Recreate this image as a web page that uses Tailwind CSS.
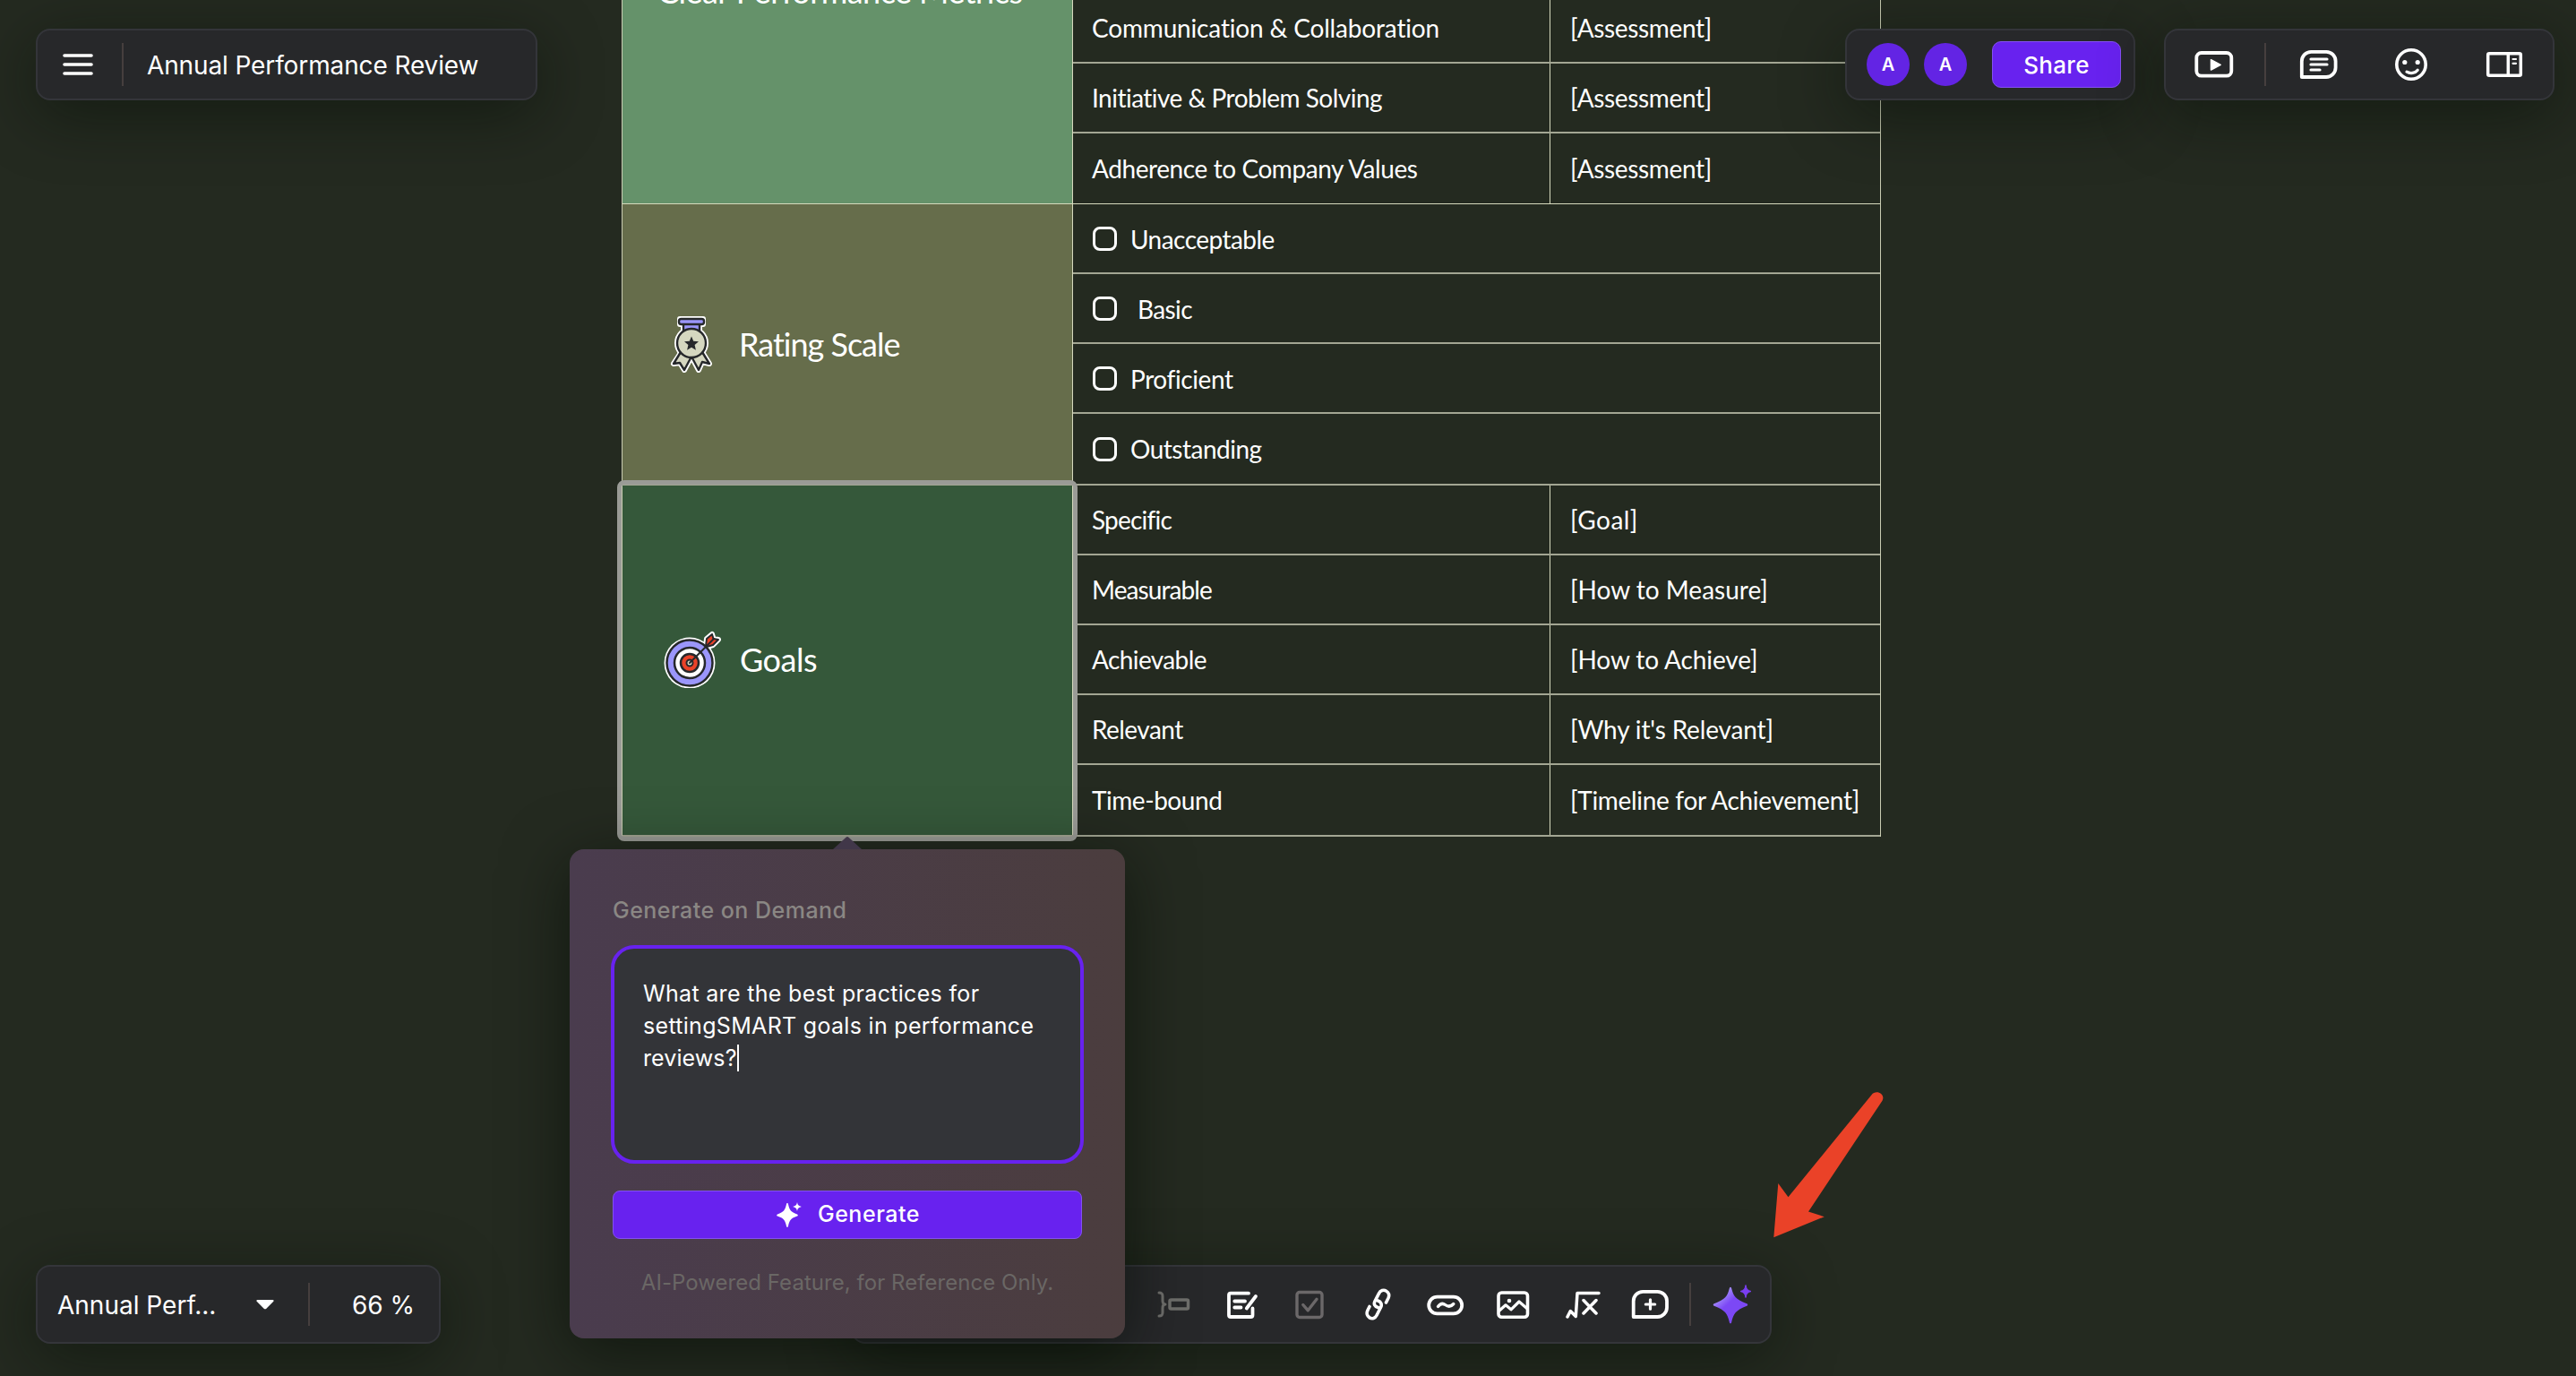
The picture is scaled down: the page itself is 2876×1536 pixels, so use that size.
<!DOCTYPE html>
<html lang="en">
<head>
    <meta charset="UTF-8">
    <meta name="viewport" content="width=device-width, initial-scale=1.0">
    <title>Annual Performance Review</title>
    <script src="https://cdn.jsdelivr.net/npm/@tailwindcss/browser@4"></script>
</head>
<body class="bg-[#242a20] text-white font-['Inter',sans-serif]">
    <div class="relative w-[2876px] h-[1536px] overflow-hidden">

        <!-- Canvas table -->
        <div class="absolute left-[694px] top-[-242px] w-[1406px] border-x border-[#c9ccb2] font-['Lato',sans-serif] text-[28px]">
            <section class="flex h-[470px] border-b border-[#d6d9bd]">
                <div class="w-[503px] shrink-0 flex items-center pl-[39px] pb-[5px] bg-[#65926a] border-r border-[#d6d9bd] text-[36px] tracking-[-0.55px]">Clear Performance Metrics</div>
                <div class="flex-1 grid grid-rows-6 divide-y-2 divide-[#a3a693]">
                    <div class="flex"><div class="w-[533px] border-r border-[#d6d9bd]"></div></div>
                    <div class="flex"><div class="w-[533px] border-r border-[#d6d9bd]"></div></div>
                    <div class="flex"><div class="w-[533px] border-r border-[#d6d9bd]"></div></div>
                    <div class="flex">
                        <div class="w-[533px] border-r border-[#d6d9bd] flex items-center pl-[21px] tracking-[-0.17px]">Communication &amp; Collaboration</div>
                        <div class="flex items-center pl-[22px] tracking-[-0.35px]">[Assessment]</div>
                    </div>
                    <div class="flex">
                        <div class="w-[533px] border-r border-[#d6d9bd] flex items-center pl-[21px] tracking-[-0.52px]">Initiative &amp; Problem Solving</div>
                        <div class="flex items-center pl-[22px] tracking-[-0.35px]">[Assessment]</div>
                    </div>
                    <div class="flex">
                        <div class="w-[533px] border-r border-[#d6d9bd] flex items-center pl-[21px] tracking-[-0.42px]">Adherence to Company Values</div>
                        <div class="flex items-center pl-[22px] tracking-[-0.35px]">[Assessment]</div>
                    </div>
                </div>
            </section>
            <section class="flex h-[314px] border-b-2 border-[#a3a693]">
                <div class="w-[503px] shrink-0 flex items-center gap-[29px] pl-[53px] bg-[#666d4b] border-r border-[#d6d9bd] text-[36px]">
                    <svg class="w-[48px] h-[64px]" viewBox="0 0 48 64" fill="none" stroke-linejoin="round">
                        <g stroke="#fff" stroke-width="6" fill="#fff"><path d="M11 4h26v6h-4v6H15v-6h-4z"/><circle cx="24" cy="31" r="16"/><path d="M12 42 4 54l7-1 5 8 8-15 8 15 4-9 8 2-8-13z"/></g>
                        <g stroke="#26282b" stroke-width="2.4"><path fill="#d5d7c0" d="M12 41 4 54l7-1 5 8 8-15 8 15 4-9 8 2-8-13z"/><path fill="#9b96fb" d="M15 8h18v10H15z"/><rect x="10" y="4" width="28" height="6" rx="2.5" fill="#9b96fb"/><circle cx="24" cy="31" r="16" fill="#d5d7c0"/></g>
                        <path fill="#26282b" d="m24 23.500 2.200 5.300 5.800.5-4.400 3.800 1.300 5.600-4.900-3-4.900 3 1.300-5.600-4.400-3.800 5.800-.5z"/>
                    </svg>
                    <span class="tracking-[-1px]">Rating Scale</span>
                </div>
                <div class="flex-1 grid grid-rows-4 divide-y-2 divide-[#a3a693]">
                    <div class="flex items-center pl-[22px] pt-px gap-[15px]"><i class="w-[27px] h-[27px] border-3 border-white rounded-[8px]"></i><span class="tracking-[-0.55px]">Unacceptable</span></div>
                    <div class="flex items-center pl-[22px] pt-px gap-[23px]"><i class="w-[27px] h-[27px] border-3 border-white rounded-[8px]"></i><span class="tracking-[-0.6px]">Basic</span></div>
                    <div class="flex items-center pl-[22px] pt-px gap-[15px]"><i class="w-[27px] h-[27px] border-3 border-white rounded-[8px]"></i><span class="tracking-[-0.4px]">Proficient</span></div>
                    <div class="flex items-center pl-[22px] gap-[15px]"><i class="w-[27px] h-[27px] border-3 border-white rounded-[8px]"></i><span class="tracking-[-0.5px]">Outstanding</span></div>
                </div>
            </section>
            <section class="flex h-[392px] border-b-2 border-[#a3a693]">
                <div class="w-[503px] shrink-0 flex items-center gap-[21px] pl-[46px] pb-[3px] bg-[#35583a] border-r border-[#d6d9bd] text-[36px]">
                    <svg class="w-[64px] h-[64px]" viewBox="0 0 64 64" fill="none" stroke-linejoin="round" stroke-linecap="round">
                        <circle cx="29" cy="36" r="28.500" fill="#fff"/>
                        <path d="m47 17 1-8 6-5 1.500 5L61 10l-6 6-7 2z" fill="#fff" stroke="#fff" stroke-width="6"/>
                        <circle cx="29" cy="36" r="25.500" fill="#9b96fb" stroke="#26282b" stroke-width="2.500"/>
                        <circle cx="29" cy="36" r="17" fill="#fff" stroke="#26282b" stroke-width="2.500"/>
                        <circle cx="29" cy="36" r="10" fill="#ea4228" stroke="#26282b" stroke-width="2.500"/>
                        <circle cx="29" cy="36" r="3.500" fill="#d5d7c0" stroke="#26282b" stroke-width="2"/>
                        <path d="m47 17 1-8 6-5 1.500 5L61 10l-6 6-7 2z" fill="#ea4228" stroke="#26282b" stroke-width="2"/>
                        <path d="M29 36 56 9" stroke="#26282b" stroke-width="2"/>
                    </svg>
                    <span class="tracking-[-0.5px]">Goals</span>
                </div>
                <div class="flex-1 grid grid-rows-5 divide-y-2 divide-[#a3a693]">
                    <div class="flex">
                        <div class="w-[533px] border-r border-[#d6d9bd] flex items-center pl-[21px] tracking-[-0.8px]">Specific</div>
                        <div class="flex items-center pl-[22px] tracking-[0.45px]">[Goal]</div>
                    </div>
                    <div class="flex">
                        <div class="w-[533px] border-r border-[#d6d9bd] flex items-center pl-[21px] tracking-[-0.9px]">Measurable</div>
                        <div class="flex items-center pl-[22px]">[How to Measure]</div>
                    </div>
                    <div class="flex">
                        <div class="w-[533px] border-r border-[#d6d9bd] flex items-center pl-[21px] tracking-[-0.6px]">Achievable</div>
                        <div class="flex items-center pl-[22px] tracking-[-0.1px]">[How to Achieve]</div>
                    </div>
                    <div class="flex">
                        <div class="w-[533px] border-r border-[#d6d9bd] flex items-center pl-[21px] tracking-[-0.55px]">Relevant</div>
                        <div class="flex items-center pl-[22px] tracking-[-0.15px]">[Why it's Relevant]</div>
                    </div>
                    <div class="flex">
                        <div class="w-[533px] border-r border-[#d6d9bd] flex items-center pl-[21px] tracking-[-0.45px]">Time-bound</div>
                        <div class="flex items-center pl-[22px] tracking-[-0.31px]">[Timeline for Achievement]</div>
                    </div>
                </div>
            </section>
        </div>

        <!-- Selected cell outline -->
        <div class="absolute left-[689px] top-[536px] w-[514px] h-[403px] border-5 border-[#9a9b96] rounded-lg"></div>

        <!-- Title bar -->
        <div class="absolute left-[40px] top-[32px] w-[560px] h-[80px] flex items-center pl-[28px] bg-[#27282a] border-2 border-[#34353a] rounded-2xl shadow-[0_16px_72px_rgba(0,10,0,0.45)]">
            <svg class="w-[34px] h-[24px]" viewBox="0 0 34 24" stroke="#fff" stroke-width="3.600" stroke-linecap="round"><path d="M2 2h30M2 12h30M2 22h30"/></svg>
            <div class="w-[2px] h-[48px] ml-[32px] bg-[#463f3e]"></div>
            <span class="ml-[26px] mt-[2px] text-[28px] tracking-[-0.12px]">Annual Performance Review</span>
        </div>

        <!-- Share -->
        <div class="absolute left-[2060px] top-[32px] w-[324px] h-[80px] flex items-center pl-[22px] bg-[#27282a] border-2 border-[#34353a] rounded-2xl shadow-[0_16px_72px_rgba(0,10,0,0.45)]">
            <div class="w-[48px] h-[48px] rounded-full bg-[#6324e4] flex items-center justify-center text-[20px] font-semibold">A</div>
            <div class="w-[48px] h-[48px] ml-[16px] rounded-full bg-[#6324e4] flex items-center justify-center text-[20px] font-semibold">A</div>
            <button class="w-[144px] h-[52px] ml-[28px] rounded-[10px] bg-[#6822ef] border border-[#8450f2] text-[26px] font-medium tracking-[0.3px]">Share</button>
        </div>

        <!-- View tools -->
        <div class="absolute left-[2416px] top-[32px] w-[436px] h-[80px] flex items-center pl-[30px] bg-[#27282a] border-2 border-[#34353a] rounded-2xl shadow-[0_16px_72px_rgba(0,10,0,0.45)]">
            <svg class="w-[48px] h-[48px]" viewBox="0 0 48 48" fill="none" stroke="#fff" stroke-width="3.800"><rect x="4.300" y="11" width="39" height="25.700" rx="5.500"/><path d="M20.500 18.700v11.400l10.700-5.700z" fill="#fff" stroke-width="1.500" stroke-linejoin="round"/></svg>
            <div class="w-[2px] h-[48px] ml-[32px] bg-[#463f3e]"></div>
            <svg class="w-[48px] h-[48px] ml-[35px]" viewBox="0 0 48 48" fill="none" stroke="#fff" stroke-width="3.800" stroke-linecap="round" stroke-linejoin="round"><path d="M4.800 38V20.500C4.800 14.500 9.500 9.800 15.300 9.800h17C38 9.800 42.600 14.500 42.600 20.300v7.200c0 5.800-4.700 10.500-10.500 10.500z"/><path stroke-width="3.200" d="M15 18h18M15 24h18M15 30h10"/></svg>
            <svg class="w-[48px] h-[48px] ml-[55px]" viewBox="0 0 48 48" fill="none" stroke="#fff" stroke-width="3.600" stroke-linecap="round"><circle cx="24" cy="24" r="16.200"/><circle cx="16.800" cy="21.500" r="2.600" fill="#fff" stroke="none"/><circle cx="31.200" cy="21.500" r="2.600" fill="#fff" stroke="none"/><path stroke-width="3.200" d="M19 32.200c4 2.300 9.500 1.600 12.200-2"/></svg>
            <svg class="w-[48px] h-[48px] ml-[56px]" viewBox="0 0 48 48" fill="none" stroke="#fff" stroke-width="3.500" stroke-linecap="round"><rect x="5.700" y="11.700" width="36.600" height="24.600" rx="1.500"/><path stroke-linecap="butt" d="M28.300 11v26"/><path stroke-width="2.200" d="M33.500 18h3.500M33.500 22.800h3.500"/></svg>
        </div>

        <!-- Page and zoom -->
        <div class="absolute left-[40px] top-[1412px] w-[452px] h-[88px] flex items-center pl-[22px] bg-[#27282a] border-2 border-[#34353a] rounded-2xl shadow-[0_16px_72px_rgba(0,10,0,0.45)]">
            <span class="w-[222px] text-[28px] mt-[2px]">Annual Perf...</span>
            <svg class="w-[20px] h-[11px]" viewBox="0 0 20 11" fill="#fff"><path d="M1.500 0h17c1 0 1.500 1 .8 1.700l-8.200 8.200c-.6.6-1.600.6-2.200 0L.7 1.700C0 1 .5 0 1.500 0z"/></svg>
            <div class="w-[2px] h-[48px] ml-[38px] bg-[#463f3e]"></div>
            <span class="ml-[47px] mt-[2px] text-[28px]">66 %</span>
        </div>

        <!-- Bottom toolbar -->
        <div class="absolute left-[950px] top-[1412px] w-[1028px] h-[88px] flex items-center gap-[28px] pl-[334px] bg-[#27282a] border-2 border-[#34353a] rounded-2xl shadow-[0_16px_72px_rgba(0,10,0,0.45)]">
            <svg class="w-[48px] h-[48px] shrink-0" viewBox="0 0 48 48" fill="none" stroke="#6e6e6b" stroke-width="3" stroke-linecap="round" stroke-linejoin="round"><path d="M8 11c3 0 4 1 4 4v5c0 2.500.8 4 3 4-2.200 0-3 1.500-3 4v5c0 3-1 4-4 4"/><rect x="20" y="19" width="20.500" height="10" rx="1.500" stroke-width="3.500"/></svg>
            <svg class="w-[48px] h-[48px] shrink-0" viewBox="0 0 48 48" fill="none" stroke="#fff" stroke-width="3.800" stroke-linecap="round" stroke-linejoin="round"><path d="M32 11.700H12a2 2 0 0 0-2 2V36a2 2 0 0 0 2 2h22.500a2 2 0 0 0 2-2v-7.500M40 15 29.800 28.500M16.300 20.500H28M16.300 27.500h7.200"/></svg>
            <svg class="w-[48px] h-[48px] shrink-0" viewBox="0 0 48 48" fill="none" stroke="#6b6869" stroke-width="3.400" stroke-linecap="round" stroke-linejoin="round"><rect x="10" y="10.500" width="28" height="28" rx="3"/><path d="m16.800 24.500 5.500 6.300 9.700-12.500"/></svg>
            <svg class="w-[48px] h-[48px] shrink-0" viewBox="0 0 48 48" fill="none" stroke="#fff" stroke-width="3.600" stroke-linecap="round" stroke-linejoin="round"><path d="M24.500 27.500c-4-1.200-5-4-3.500-7l4.500-8.700c1.700-3.300 5.200-4.400 8-2.800 3 1.600 4 4.800 2.500 8L33.500 22M15 26.500l-2 4c-1.700 3.500-.7 6.800 2 8.400 3 1.700 6.400.6 8-2.600l4.600-9c1.500-3.200.4-6-3.100-7.300"/></svg>
            <svg class="w-[48px] h-[48px] shrink-0" viewBox="0 0 48 48" fill="none" stroke="#fff" stroke-width="3.800" stroke-linecap="round" stroke-linejoin="round"><rect x="5.200" y="15.600" width="37" height="18.800" rx="9.400"/><path stroke-width="3.400" d="M15.500 26.500c2.500-3.200 5-4.200 8-2s6 2.700 9.300-1"/></svg>
            <svg class="w-[48px] h-[48px] shrink-0" viewBox="0 0 48 48" fill="none" stroke="#fff" stroke-width="3.600" stroke-linecap="round" stroke-linejoin="round"><rect x="7" y="11" width="32.500" height="27.200" rx="3.500"/><path stroke-width="3.200" d="m8 31 7-6.200 6 5L30 21l9 7.800"/><circle cx="19" cy="20" r="2.300" fill="#fff" stroke="none"/></svg>
            <svg class="w-[48px] h-[48px] shrink-0" viewBox="0 0 48 48" fill="none" stroke="#fff" stroke-width="3.500" stroke-linecap="round" stroke-linejoin="round"><path d="m8 38 3.300-6.500 6 6L19 11.500h24M26 19.500l14 14.500M40 19.500 26 34"/></svg>
            <svg class="w-[48px] h-[48px] shrink-0" viewBox="0 0 48 48" fill="none" stroke="#fff" stroke-width="3.800" stroke-linecap="round" stroke-linejoin="round"><path d="M5.700 38V20.500C5.700 14.500 10.400 9.800 16.200 9.800h16.300C38.300 9.800 43 14.500 43 20.300v7.200C43 33.300 38.300 38 32.500 38z"/><path stroke-width="3.200" d="M24.500 18.800v10.400M19.300 24h10.400"/></svg>
            <div class="w-[2px] h-[48px] shrink-0 -ml-[8px] bg-[#463f3e]"></div>
            <svg class="w-[48px] h-[48px] shrink-0 -ml-[8px]" viewBox="0 0 48 48">
                <defs><linearGradient id="sparkle" x1="0.250" y1="0.150" x2="0.480" y2="0.420"><stop offset="0" stop-color="#a996fa"/><stop offset="1" stop-color="#7c48f5"/></linearGradient></defs>
                <path fill="url(#sparkle)" d="M24 4.700c.8 0 1 .8 1.200 1.500 2.200 9 4.500 11.900 17.100 17 1.300.5 1.300 2 0 2.500-12.600 5-14.900 8.500-17.100 18-.2.900-.4 1.600-1.200 1.600s-1-.7-1.200-1.600c-2.200-9.500-4.500-13-17.100-18-1.300-.5-1.300-2 0-2.500 12.600-5.100 14.900-8 17.100-17 .2-.7.4-1.500 1.200-1.500z"/>
                <path fill="#7a3ff2" stroke="#7a3ff2" stroke-linejoin="round" d="M41 2.500c.9 4.500 2 5.500 6 7-4 1.500-5.100 2.500-6 7-.9-4.500-2-5.500-6-7 4-1.500 5.100-2.500 6-7z"/>
            </svg>
        </div>

        <!-- Prompt popover -->
        <div class="absolute left-[636px] top-[948px] w-[620px] h-[546px] px-[46px] bg-linear-to-r from-[#4a3c4e] to-[#4b3d3e] rounded-2xl shadow-[0_16px_72px_rgba(0,10,0,0.55)]">
            <svg class="absolute left-[294px] -top-[14px] w-[32px] h-[14px]" viewBox="0 0 32 14"><path d="M0 14 14.500.8a2.200 2.200 0 0 1 3 0L32 14z" fill="#413749"/></svg>
            <div class="mt-[50px] ml-[2px] h-[36px] leading-[36px] text-[25px] font-medium tracking-[0.48px] text-[#8a8784]">Generate on Demand</div>
            <div class="mt-[21px] h-[244px] w-[528px] pt-[32px] pl-[32px] border-4 border-[#6822ef] rounded-[26px] bg-[#333438] text-[25px] leading-[36px]">
                <div class="tracking-[0.32px]">What are the best practices for</div>
                <div class="tracking-[0.31px]">settingSMART goals in performance</div>
                <div class="tracking-[0.1px] flex items-center">reviews?<i class="w-[2px] h-[30px] bg-white"></i></div>
            </div>
            <button class="mt-[30px] ml-[2px] w-[524px] h-[54px] flex items-center justify-center gap-[18px] rounded-lg bg-[#6822ef] border border-[#8450f2] pl-[2px] text-[25px] font-medium tracking-[0.55px]">
                <svg class="w-[28px] h-[28px]" viewBox="0 0 28 28" fill="#fff"><path d="M12 1c.6 0 .8.500 1 1.200 1.500 6.800 3 8.700 10 11.200 1.100.4 1.100 1.800 0 2.200-7 2.500-8.500 4.400-10 11.200-.2.700-.4 1.200-1 1.200s-.8-.5-1-1.200c-1.500-6.800-3-8.700-10-11.200-1.100-.4-1.100-1.800 0-2.200 7-2.500 8.500-4.400 10-11.200.2-.7.4-1.200 1-1.200z"/><path d="M23 0c.6 3 1.500 4 4.800 5-3.300 1-4.200 2-4.800 5-.6-3-1.500-4-4.800-5 3.300-1 4.200-2 4.800-5z"/></svg>
                Generate
            </button>
            <div class="mt-[31px] text-center text-[24px] leading-[36px] tracking-[0.05px] text-[#6a6765]">AI-Powered Feature, for Reference Only.</div>
        </div>

        <!-- Pointer arrow -->
        <svg class="absolute left-[1976px] top-[1216px] w-[130px] h-[168px]" viewBox="0 0 130 168"><path fill="#ea4228" d="M4.300 165.200 9.300 105l11.200 15.200L113.500 6.200c5-6.500 16-1 12 6.500L43 136.400l17.800 5.800z"/></svg>
    </div>
</body>
</html>
